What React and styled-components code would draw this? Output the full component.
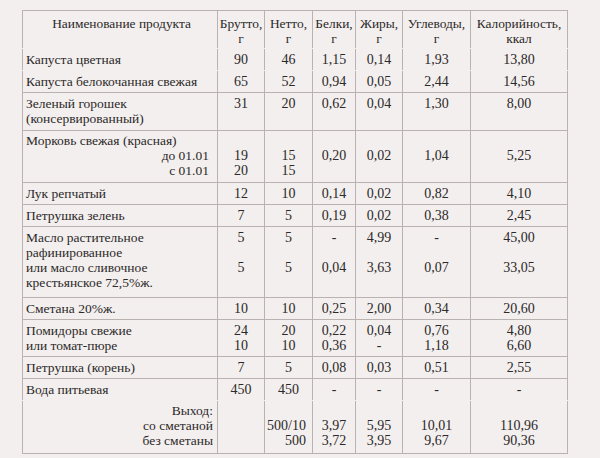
import React from 'react';
import styled, { createGlobalStyle } from 'styled-components';

const LINE = '#bab2b1';
const INK = '#2b2929';
const COLS = '195px 47px 48px 43px 47px 68px 98px';
const SERIF = `"Liberation Serif", "Times New Roman", Tinos, "DejaVu Serif", serif`;

const Global = createGlobalStyle`
  html, body {
    margin: 0;
    padding: 0;
    background: #f3efee;
  }
  body {
    width: 600px;
    height: 458px;
    overflow: hidden;
    font-family: ${SERIF};
    color: ${INK};
  }
`;

const Page = styled.div`
  padding: 10px 0 0 22px;
  font-family: ${SERIF};
`;

const Table = styled.div`
  width: 546px;
  border-bottom: 1px solid ${LINE};
`;

const Row = styled.div`
  display: grid;
  grid-template-columns: ${COLS};
  border-top: 1px solid ${(p) => (p.$line ? LINE : 'transparent')};
`;

const Cell = styled.div`
  box-sizing: border-box;
  border-left: 1px solid ${LINE};
  padding: ${(p) => p.$pt}px 0 ${(p) => p.$pb}px 0;
  font-family: ${SERIF};
  font-size: ${(p) => (p.$head ? '13.4px' : '14px')};
  line-height: 15px;
  white-space: nowrap;
  text-align: center;
  color: ${INK};
  &:last-child {
    border-right: 1px solid ${LINE};
  }
`;

const NameCell = styled(Cell)`
  text-align: left;
  padding-left: 3px;
  font-size: ${(p) => (p.$head ? '13.4px' : '13.5px')};
`;

const Line = styled.div`
  height: 15px;
  text-align: ${(p) => p.$align || 'inherit'};
  padding-right: ${(p) => p.$pr || 0}px;
  padding-left: ${(p) => p.$pl || 0}px;
`;

const rows = [
  {
    line: true, pt: 5, pb: 2, head: true,
    name: [{ t: 'Наименование продукта', a: 'center' }, { t: '' }],
    cells: [
      ['Брутто,', 'г'], ['Нетто,', 'г'], ['Белки,', 'г'], ['Жиры,', 'г'],
      ['Углеводы,', 'г'], ['Калорийность,', 'ккал'],
    ],
  },
  { line: false, pt: 3, pb: 3, name: [{ t: 'Капуста цветная' }], cells: [['90'], ['46'], ['1,15'], ['0,14'], ['1,93'], ['13,80']] },
  { line: false, pt: 3, pb: 3, name: [{ t: 'Капуста белокочанная свежая' }], cells: [['65'], ['52'], ['0,94'], ['0,05'], ['2,44'], ['14,56']] },
  {
    line: true, pt: 3, pb: 4,
    name: [{ t: 'Зеленый горошек' }, { t: '(консервированный)' }],
    cells: [['31', ''], ['20', ''], ['0,62', ''], ['0,04', ''], ['1,30', ''], ['8,00', '']],
  },
  {
    line: true, pt: 2, pb: 4,
    name: [{ t: 'Морковь свежая (красная)' }, { t: 'до 01.01', a: 'right', pr: 8 }, { t: 'с 01.01', a: 'right', pr: 8 }],
    cells: [['', '19', '20'], ['', '15', '15'], ['', '0,20', ''], ['', '0,02', ''], ['', '1,04', ''], ['', '5,25', '']],
  },
  { line: true, pt: 3, pb: 3, name: [{ t: 'Лук репчатый' }], cells: [['12'], ['10'], ['0,14'], ['0,02'], ['0,82'], ['4,10']] },
  { line: true, pt: 3, pb: 3, name: [{ t: 'Петрушка зелень' }], cells: [['7'], ['5'], ['0,19'], ['0,02'], ['0,38'], ['2,45']] },
  {
    line: true, pt: 3, pb: 7,
    name: [{ t: 'Масло растительное' }, { t: 'рафинированное' }, { t: 'или масло сливочное' }, { t: 'крестьянское 72,5%ж.' }],
    cells: [
      ['5', '', '5', ''], ['5', '', '5', ''], ['-', '', '0,04', ''], ['4,99', '', '3,63', ''],
      ['-', '', '0,07', ''], ['45,00', '', '33,05', ''],
    ],
  },
  { line: true, pt: 3, pb: 3, name: [{ t: 'Сметана 20%ж.' }], cells: [['10'], ['10'], ['0,25'], ['2,00'], ['0,34'], ['20,60']] },
  {
    line: true, pt: 3, pb: 3,
    name: [{ t: 'Помидоры свежие' }, { t: 'или томат-пюре' }],
    cells: [['24', '10'], ['20', '10'], ['0,22', '0,36'], ['0,04', '-'], ['0,76', '1,18'], ['4,80', '6,60']],
  },
  { line: true, pt: 3, pb: 3, name: [{ t: 'Петрушка (корень)' }], cells: [['7'], ['5'], ['0,08'], ['0,03'], ['0,51'], ['2,55']] },
  { line: true, pt: 3, pb: 3, name: [{ t: 'Вода питьевая' }], cells: [['450'], ['450'], ['-'], ['-'], ['-'], ['-']] },
  {
    line: false, pt: 2, pb: 5,
    name: [{ t: 'Выход:', a: 'right', pr: 4 }, { t: 'со сметаной', a: 'right', pr: 4 }, { t: 'без сметаны', a: 'right', pr: 4 }],
    cells: [
      ['', '', ''],
      [{ t: '' }, { t: '500/10', a: 'right', pr: 6 }, { t: '500', a: 'right', pr: 6 }],
      ['', '3,97', '3,72'], ['', '5,95', '3,95'], ['', '10,01', '9,67'], ['', '110,96', '90,36'],
    ],
  },
];

const renderLine = (l, i) => {
  const item = typeof l === 'string' ? { t: l } : l;
  return (
    <Line key={i} $align={item.a} $pr={item.pr} $pl={item.pl}>
      {item.t === '' ? '\u00a0' : item.t}
    </Line>
  );
};

export default function App() {
  return (
    <>
      <Global />
      <Page>
        <Table>
          {rows.map((r, ri) => (
            <Row key={ri} $line={r.line}>
              <NameCell $pt={r.pt} $pb={r.pb} $head={r.head}>
                {r.name.map(renderLine)}
              </NameCell>
              {r.cells.map((c, ci) => (
                <Cell key={ci} $pt={r.pt} $pb={r.pb} $head={r.head}>
                  {c.map(renderLine)}
                </Cell>
              ))}
            </Row>
          ))}
        </Table>
      </Page>
    </>
  );
}
